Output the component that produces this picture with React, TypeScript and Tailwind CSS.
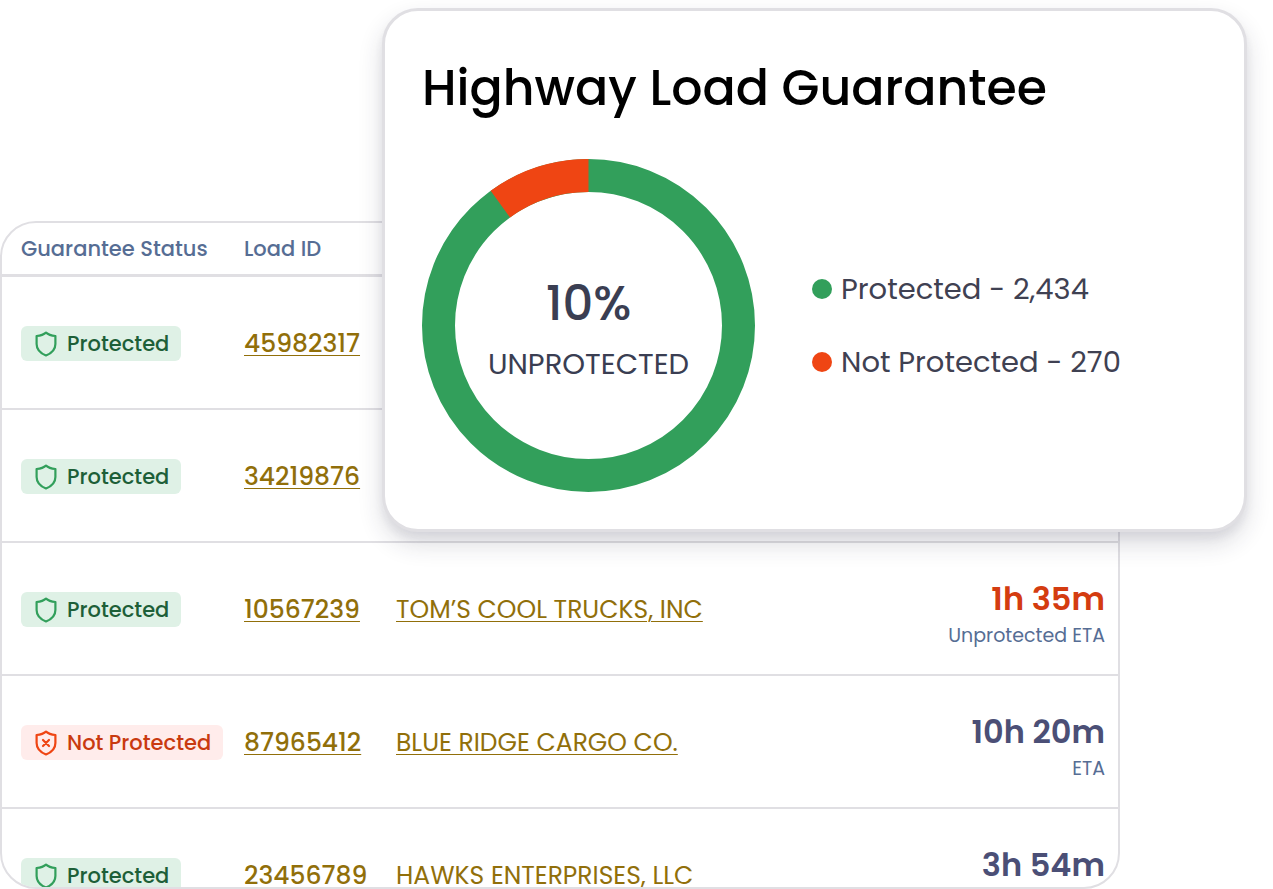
import { ReactElement } from "react";

type Load = {
  id: string;
  isProtected: boolean;
  carrier?: string;
  eta?: string;
  etaLabel?: string;
  isLate?: boolean;
};

type LegendItem = {
  label: string;
  dotClass: string;
};

const loads: Load[] = [
  { id: "45982317", isProtected: true },
  { id: "34219876", isProtected: true },
  {
    id: "10567239",
    isProtected: true,
    carrier: "TOM’S COOL TRUCKS, INC",
    eta: "1h 35m",
    etaLabel: "Unprotected ETA",
    isLate: true,
  },
  {
    id: "87965412",
    isProtected: false,
    carrier: "BLUE RIDGE CARGO CO.",
    eta: "10h 20m",
    etaLabel: "ETA",
  },
  {
    id: "23456789",
    isProtected: true,
    carrier: "HAWKS ENTERPRISES, LLC",
    eta: "3h 54m",
  },
];

const legend: LegendItem[] = [
  { label: "Protected - 2,434", dotClass: "bg-[#329f5b]" },
  { label: "Not Protected - 270", dotClass: "bg-[#ef4513]" },
];

const ShieldIcon = ({ crossed }: { crossed: boolean }): ReactElement => (
  <svg
    viewBox="0 0 22 26"
    className="h-[26px] w-[22px] shrink-0"
    fill="none"
    stroke={crossed ? "#ef4513" : "#329f5b"}
    strokeWidth="2.2"
    strokeLinecap="round"
    strokeLinejoin="round"
    aria-hidden="true"
  >
    <path d="M11 1.6C9.2 3.2 6.2 4.5 1.6 5V13C1.6 18.8 5.2 22.2 11 24.5C16.8 22.2 20.4 18.8 20.4 13V5C15.8 4.5 12.8 3.2 11 1.6Z" />
    {crossed && <path d="M8 10L14 16M14 10L8 16" />}
  </svg>
);

const StatusBadge = ({ isProtected }: { isProtected: boolean }): ReactElement => (
  <span
    className={`flex h-[35px] w-fit items-center gap-2.5 rounded-md pr-3 pl-3.5 text-[21px] font-medium whitespace-nowrap ${
      isProtected ? "bg-[#dff1e6] text-[#1d5f38]" : "bg-[#ffeceb] text-[#c93a10]"
    }`}
  >
    <ShieldIcon crossed={!isProtected} />
    {isProtected ? "Protected" : "Not Protected"}
  </span>
);

const LoadsTable = (): ReactElement => (
  <div className="min-h-0 flex-1 overflow-hidden rounded-[36px] rounded-tr-none border-2 border-[#e0dfe3]">
    <table className="w-full table-fixed border-separate border-spacing-0 text-left">
      <thead>
        <tr className="h-[54px] text-[21px] text-[#566d94]">
          <th className="w-[242px] border-b-3 border-[#e0dfe3] pl-[19px] font-medium whitespace-nowrap">
            Guarantee Status
          </th>
          <th className="w-[152px] border-b-3 border-[#e0dfe3] font-medium">Load ID</th>
          <th className="border-b-3 border-[#e0dfe3]" />
          <th className="w-[220px] border-b-3 border-[#e0dfe3]" />
        </tr>
      </thead>
      <tbody>
        {loads.map((load) => (
          <tr key={load.id} className="h-[133px]">
            <td className="border-b-2 border-[#e0dfe3] pt-0.5 pl-[19px]">
              <StatusBadge isProtected={load.isProtected} />
            </td>
            <td className="border-b-2 border-[#e0dfe3] pt-0.5 text-[25px] font-medium">
              <a
                href="#"
                className="text-[#916f0a] underline decoration-1 underline-offset-3"
              >
                {load.id}
              </a>
            </td>
            <td className="border-b-2 border-[#e0dfe3] pt-0.5 text-[25px] whitespace-nowrap">
              {load.carrier && (
                <a
                  href="#"
                  className="text-[#916f0a] underline decoration-1 underline-offset-3"
                >
                  {load.carrier}
                </a>
              )}
            </td>
            <td className="border-b-2 border-[#e0dfe3] pt-3.5 pr-[13px] text-right whitespace-nowrap">
              <div
                className={`min-h-10 text-[32px] leading-10 font-semibold ${
                  load.isLate ? "text-[#d43c10]" : "text-[#4b4f76]"
                }`}
              >
                {load.eta}
              </div>
              <div className="min-h-[34px] text-[19px] leading-[34px] text-[#566d94]">
                {load.etaLabel}
              </div>
            </td>
          </tr>
        ))}
      </tbody>
    </table>
  </div>
);

const DonutChart = ({ percent }: { percent: number }): ReactElement => (
  <div className="grid size-[333px] shrink-0 place-items-center">
    <svg
      viewBox="0 0 333 333"
      className="col-start-1 row-start-1 size-full -rotate-90"
      fill="none"
      strokeWidth="33"
      aria-hidden="true"
    >
      <circle cx="166.5" cy="166.5" r="150" stroke="#329f5b" />
      <circle
        cx="166.5"
        cy="166.5"
        r="150"
        stroke="#ef4513"
        pathLength="100"
        strokeDasharray={`${percent} ${100 - percent}`}
        strokeDashoffset={percent}
      />
    </svg>
    <div className="col-start-1 row-start-1 pt-4 text-center font-medium text-[#3a3e52]">
      <div className="text-5xl leading-[60px]">{percent}%</div>
      <div className="text-[29px] leading-[60px] font-normal">UNPROTECTED</div>
    </div>
  </div>
);

const GuaranteeCard = (): ReactElement => (
  <section className="absolute top-2 right-[26px] left-[382px] rounded-[36px] border-3 border-[#e0dfe3] bg-white px-[37px] pt-[49px] pb-[37px] shadow-[0_12px_24px_rgba(40,36,60,0.16),0_6px_8px_rgba(40,36,60,0.06)]">
    <h1 className="text-[49px] leading-14 font-medium text-black">
      Highway Load Guarantee
    </h1>
    <div className="mt-[43px] flex items-center gap-[57px]">
      <DonutChart percent={10} />
      <ul className="flex flex-col gap-[37px]">
        {legend.map((item) => (
          <li
            key={item.label}
            className="flex items-center gap-[9px] text-[29px] leading-9 whitespace-nowrap text-[#3f4152]"
          >
            <span className={`size-5 rounded-full ${item.dotClass}`} />
            {item.label}
          </li>
        ))}
      </ul>
    </div>
  </section>
);

const App = (): ReactElement => (
  <main className="relative flex h-screen min-h-[600px] flex-col overflow-hidden bg-white pt-[221px] pr-[153px] font-[Poppins,Inter,sans-serif]">
    <LoadsTable />
    <GuaranteeCard />
  </main>
);

export default App;
